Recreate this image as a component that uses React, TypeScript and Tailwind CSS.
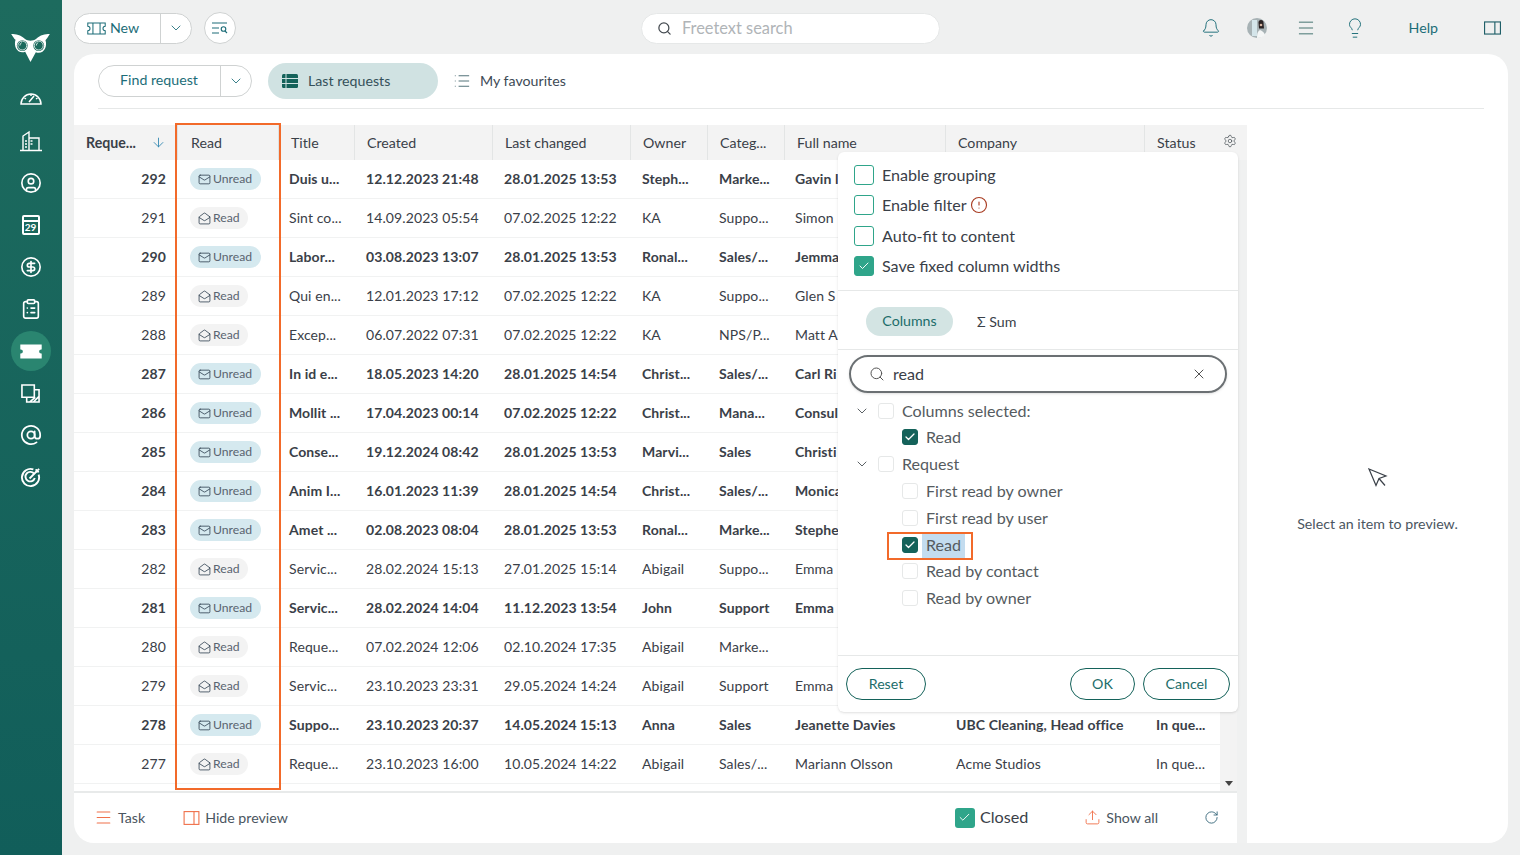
import React from 'react';
import {
  ArrowDown, AtSign, Bell, Check, ChevronDown, CircleAlert, CircleDollarSign, CircleUser, ClipboardList,
  Lightbulb, List, Mail, MailOpen, Menu, RotateCw, Search, Settings, Upload, X,
} from 'lucide-react';

const cols = 'grid grid-cols-[104px_101px_76px_138px_138px_77px_77px_161px_199px_75px]';

// Full name, company and status sit under the popover on most rows, only the visible part is kept
const rows = [
  ['292', 1, 'Duis u...', '12.12.2023 21:48', '28.01.2025 13:53', 'Steph...', 'Marke...', 'Gavin l', '', ''],
  ['291', 0, 'Sint co...', '14.09.2023 05:54', '07.02.2025 12:22', 'KA', 'Suppo...', 'Simon', '', ''],
  ['290', 1, 'Labor...', '03.08.2023 13:07', '28.01.2025 13:53', 'Ronal...', 'Sales/...', 'Jemma', '', ''],
  ['289', 0, 'Qui en...', '12.01.2023 17:12', '07.02.2025 12:22', 'KA', 'Suppo...', 'Glen S', '', ''],
  ['288', 0, 'Excep...', '06.07.2022 07:31', '07.02.2025 12:22', 'KA', 'NPS/P...', 'Matt A', '', ''],
  ['287', 1, 'In id e...', '18.05.2023 14:20', '28.01.2025 14:54', 'Christ...', 'Sales/...', 'Carl Ri', '', ''],
  ['286', 1, 'Mollit ...', '17.04.2023 00:14', '07.02.2025 12:22', 'Christ...', 'Mana...', 'Consul', '', ''],
  ['285', 1, 'Conse...', '19.12.2024 08:42', '28.01.2025 13:53', 'Marvi...', 'Sales', 'Christi', '', ''],
  ['284', 1, 'Anim I...', '16.01.2023 11:39', '28.01.2025 14:54', 'Christ...', 'Sales/...', 'Monica', '', ''],
  ['283', 1, 'Amet ...', '02.08.2023 08:04', '28.01.2025 13:53', 'Ronal...', 'Marke...', 'Stephe', '', ''],
  ['282', 0, 'Servic...', '28.02.2024 15:13', '27.01.2025 15:14', 'Abigail', 'Suppo...', 'Emma', '', ''],
  ['281', 1, 'Servic...', '28.02.2024 14:04', '11.12.2023 13:54', 'John', 'Support', 'Emma', '', ''],
  ['280', 0, 'Reque...', '07.02.2024 12:06', '02.10.2024 17:35', 'Abigail', 'Marke...', '', '', ''],
  ['279', 0, 'Servic...', '23.10.2023 23:31', '29.05.2024 14:24', 'Abigail', 'Support', 'Emma', '', ''],
  ['278', 1, 'Suppo...', '23.10.2023 20:37', '14.05.2024 15:13', 'Anna', 'Sales', 'Jeanette Davies', 'UBC Cleaning, Head office', 'In que...'],
  ['277', 0, 'Reque...', '23.10.2023 16:00', '10.05.2024 14:22', 'Abigail', 'Sales/...', 'Mariann Olsson', 'Acme Studios', 'In que...'],
] as const;

const heads = ['Title', 'Created', 'Last changed', 'Owner', 'Categ...', 'Full name', 'Company', 'Status'];

const TicketIcon = ({ className = '', filled = false }: { className?: string; filled?: boolean }) => (
  <svg viewBox="0 0 24 16" className={className} fill={filled ? 'currentColor' : 'none'} stroke="currentColor" strokeWidth="1.3">
    <path d="M1 1h22v4.2a2.8 2.8 0 0 0 0 5.6V15H1v-4.2a2.8 2.8 0 0 0 0-5.6z" />
    {!filled && <path d="M7.5 1v14M16.5 1v14" />}
  </svg>
);

const Owl = () => (
  <svg viewBox="0 0 40 30" className="w-[39px] h-[29px]" fill="#fff">
    <path d="M0 1c5 0 10 1 14 5 2 1.500 4 2 6 2s4-.5 6-2c4-4 9-5 14-5-2 3-3 5-4.500 6.500 2 6-1 13-7 13-1 0-2 0-3-.5L20 30l-5.500-10.500c-1 .5-2 .5-3 .5-6 0-9-7-7-13C3 6 2 4 0 1z" />
    <circle cx="11.500" cy="13" r="5.600" fill="#1a6a5d" />
    <circle cx="28.500" cy="13" r="5.600" fill="#1a6a5d" />
    <circle cx="11.500" cy="13" r="4.600" fill="none" stroke="#fff" strokeWidth="0.800" />
    <circle cx="28.500" cy="13" r="4.600" fill="none" stroke="#fff" strokeWidth="0.800" />
    <path d="M9 13a3 3 0 0 1 2-3M26 13a3 3 0 0 1 2-3" fill="none" stroke="#fff" strokeWidth="0.800" />
  </svg>
);

const Gauge = () => (
  <svg viewBox="0 0 22 16" className="w-[22px] h-[16px] -mt-[4px]" fill="none" stroke="#fff" strokeWidth="1.500">
    <path d="M1 15a10 10 0 0 1 20 0z" />
    <path d="M9 13l5-6M11 5v2M4.500 9l1.500 1M17.500 9l-1.500 1" />
  </svg>
);

const Building = () => (
  <svg viewBox="0 0 22 22" className="w-[22px] h-[22px]" fill="none" stroke="#fff" strokeWidth="1.400">
    <path d="M0 20.500h22M3 20V6l6-4v18M9 8h10v12" />
    <path d="M5 11h2M5 14h2M5 17h2M10.500 11h2M10.500 14h2" />
  </svg>
);

const Calendar = () => (
  <div className="w-[18px] h-[20px] border-2 border-white rounded-[2px] flex items-end justify-center text-white text-[10px] leading-[12px] font-bold relative">
    <div className="absolute top-[3px] left-0 right-0 h-[1.500px] bg-white"></div>
    29
  </div>
);

const Copies = () => (
  <svg viewBox="0 0 20 20" className="w-[19px] h-[19px]" fill="none" stroke="#fff" strokeWidth="1.700">
    <path d="M1 1h13v13H1z" />
    <path d="M6 14v5h13V6h-5M9 19l6-5M13 19l6-6" />
  </svg>
);

const TargetIcon = () => (
  <svg viewBox="0 0 22 22" className="w-[21px] h-[21px]" fill="none" stroke="#fff" strokeWidth="2">
    <path d="M19.500 8a9 9 0 1 1-5.500-5.500" />
    <path d="M15 7.500a5 5 0 1 0 .500 4" />
    <path d="M10 12L20 2" />
    <path d="M17 2v3h3" strokeWidth="1.500" />
  </svg>
);

const NavSlot = ({ children }: { children: React.ReactNode }) => (
  <div className="h-[42px] flex items-center justify-center text-white">{children}</div>
);

const Sidebar = () => (
  <div className="w-[62px] shrink-0 bg-gradient-to-b from-[#1d6b5e] to-[#115e5a] flex flex-col items-center pr-[1px]">
    <div className="mt-[33px] h-[45px]"><Owl /></div>
    <NavSlot><Gauge /></NavSlot>
    <NavSlot><Building /></NavSlot>
    <NavSlot><CircleUser size={22} strokeWidth={1.800} /></NavSlot>
    <NavSlot><Calendar /></NavSlot>
    <NavSlot><CircleDollarSign size={22} strokeWidth={1.800} /></NavSlot>
    <NavSlot><ClipboardList size={22} strokeWidth={1.800} /></NavSlot>
    <NavSlot>
      <div className="w-10 h-10 rounded-full flex items-center justify-center bg-[#2a8570]">
        <TicketIcon filled className="w-[22px] h-[15px]" />
      </div>
    </NavSlot>
    <NavSlot><Copies /></NavSlot>
    <NavSlot><AtSign size={22} strokeWidth={1.900} /></NavSlot>
    <NavSlot><TargetIcon /></NavSlot>
  </div>
);

const TopBar = () => (
  <div className="h-[54px] shrink-0 flex items-center pl-[12px] pr-[19px] pt-[2px] text-[#1c6d78]">
    <div className="h-[31px] w-[118px] bg-white border border-[#cfd2d2] rounded-full flex items-center">
      <div className="w-[86px] h-full flex items-center pl-[12px] gap-[4px] border-r border-[#cfd2d2] text-[14.200px]">
        <TicketIcon className="w-[19px] h-[13px] text-[#1c6d78]" />
        <span>New</span>
      </div>
      <div className="flex-1 flex justify-center"><ChevronDown size={16} strokeWidth={1.300} /></div>
    </div>
    <div className="ml-[12px] w-[32px] h-[32px] bg-white border border-[#cfd2d2] rounded-full flex items-center justify-center">
      <svg viewBox="0 0 16 12" className="w-[16px] h-[12px]" fill="none" stroke="#1c6d78" strokeWidth="1.100">
        <path d="M0 1h15M0 6h7M0 11h7" />
        <circle cx="11.500" cy="7" r="2.300" />
        <path d="M13 9l2 2" />
      </svg>
    </div>
    <div className="ml-[405px] w-[299px] h-[31px] bg-white rounded-full border border-[#e6e8e8] flex items-center pl-[15px] gap-[10px] text-[#b0b4b7] text-[16.400px]">
      <Search size={15} className="text-[#444a50]" />
      <span>Freetext search</span>
    </div>
    <div className="flex-1"></div>
    <Bell size={20} strokeWidth={1.150} className="mr-[26px]" />
    <svg viewBox="0 0 20 20" className="w-[20px] h-[20px] mr-[29px]">
      <circle cx="10" cy="10" r="10" fill="#a7b2b5" />
      <path d="M5 2h5v16H5z" fill="#d4e5ea" />
      <path d="M10 20c0-5 1-7 3-8 2 1 4 2 5 5-2 2-5 3-8 3z" fill="#f4f6f6" />
      <path d="M11.500 4.500a2.500 2.500 0 0 1 5 0l.5 6h-5z" fill="#2b2324" />
      <circle cx="14" cy="7" r="1.300" fill="#d6b5a2" />
    </svg>
    <Menu size={20} strokeWidth={1.150} className="mr-[28px] text-[#3f6f6c]" />
    <Lightbulb size={22} strokeWidth={1.050} />
    <span className="ml-[43px] text-[14.200px]">Help</span>
    <svg viewBox="0 0 18 14" className="ml-[46px] w-[17px] h-[14px]" fill="none" stroke="#1f5f68" strokeWidth="1.200">
      <rect x="0.600" y="0.600" width="16.800" height="12.800" />
      <path d="M11.500 0.600v12.800" />
    </svg>
  </div>
);

const Toolbar = () => (
  <div className="h-[55px] mx-[24px] shrink-0 border-b border-[#e6e8e8] flex items-center text-[14.200px] pb-[1px]">
    <div className="h-[32px] w-[154px] border border-[#cfd2d2] rounded-full flex items-center text-[#1c6d78] ml-0">
      <div className="w-[122px] h-full flex items-center justify-center border-r border-[#cfd2d2] pb-[1px] pr-[1px]">Find request</div>
      <div className="flex-1 flex justify-center"><ChevronDown size={16} strokeWidth={1.300} /></div>
    </div>
    <div className="ml-[16px] w-[170px] h-[36px] rounded-full bg-[#d0e2e2] flex items-center pl-[14px] gap-[10px] text-[#34505a]">
      <svg viewBox="0 0 16 14" className="w-[16px] h-[14px]"><rect width="16" height="14" rx="1.500" fill="#14625a" /><path d="M0 4.500h16M0 9.500h16M4 0v14" stroke="#d0e2e2" strokeWidth="1" /></svg>
      <span>Last requests</span>
    </div>
    <List size={18} strokeWidth={1.200} className="ml-[15px] text-[#40626a]" />
    <span className="ml-[9px] text-[#3d4a55]">My favourites</span>
  </div>
);

const Badge = ({ unread }: { unread: boolean }) => (
  <div className={`h-[22px] rounded-full flex items-center gap-[2px] pl-[8px] text-[12.200px] text-[#5a6470] ${unread ? 'w-[71px] bg-[#d5e9ef]' : 'w-[58px] bg-[#f3f3f3]'}`}>
    {unread ? <Mail size={13} strokeWidth={1.500} className="text-[#2f4050]" /> : <MailOpen size={13} strokeWidth={1.500} className="text-[#2f4050]" />}
    <span>{unread ? 'Unread' : 'Read'}</span>
  </div>
);

const Table = () => (
  <div className="flex-1 min-h-0 relative overflow-hidden">
    <div className={`${cols} h-[35px] bg-[#f3f3f3] text-[14.200px] text-[#3a4048] items-center`}>
      <div className="h-full flex items-center pl-[12px] border-r border-[#dfe1e1] font-bold">
        <span>Reque...</span>
        <ArrowDown size={15} strokeWidth={1.400} className="ml-[15px] text-[#2f86b0]" />
      </div>
      <div className="h-full flex items-center pl-[13px] border-r border-[#dfe1e1]">Read</div>
      {heads.map((h) => (
        <div key={h} className="h-full flex items-center pl-[12px] border-r border-[#e3e5e5] last:border-r-0">{h}</div>
      ))}
    </div>
    {rows.map((r) => (
      <div key={r[0]} className={`${cols} h-[39px] border-b border-[#f1f2f2] items-center text-[14px] tracking-[0.1px] text-[#3a4048] ${r[1] ? 'font-bold' : ''}`}>
        <div className="pr-[12px] pb-[2px] text-right">{r[0]}</div>
        <div className="pl-[12px] font-normal tracking-normal"><Badge unread={!!r[1]} /></div>
        {r.slice(2).map((c, i) => (
          <div key={i} className={`pb-[2px] whitespace-nowrap overflow-hidden ${i === 0 || i === 5 || i === 6 ? 'pl-[10px]' : 'pl-[11px]'}`}>{c}</div>
        ))}
      </div>
    ))}
    <div className="absolute right-0 top-[35px] bottom-0 w-[17px] bg-[#f3f3f3] flex flex-col justify-end items-center pb-[5px]">
      <div className="w-0 h-0 border-x-[4px] border-x-transparent border-t-[5px] border-t-[#444]"></div>
    </div>
  </div>
);

const Footer = () => (
  <div className="h-[52px] shrink-0 border-t-2 border-[#e8eaea] flex items-center text-[14.200px] text-[#4a5560] pb-[1px]">
    <Menu size={19} strokeWidth={1.300} className="ml-[20px] text-[#f0704a]" />
    <span className="ml-[5px]">Task</span>
    <svg viewBox="0 0 16 14" className="ml-[38px] w-[17px] h-[14px]" fill="none" stroke="#f0704a" strokeWidth="1.100"><rect x="0.600" y="0.600" width="14.800" height="12.800" /><path d="M10.500 0.600v12.800" /></svg>
    <span className="ml-[5px]">Hide preview</span>
    <div className="flex-1"></div>
    <div className="w-[20px] h-[20px] rounded-[3px] bg-[#2fa58a] flex items-center justify-center -ml-[1px] mr-[1px]"><Check size={13} strokeWidth={1.700} className="text-white" /></div>
    <span className="ml-[4px] text-[16.200px] text-[#3a4048]">Closed</span>
    <Upload size={17} strokeWidth={1.300} className="ml-[56px] text-[#f0704a]" />
    <span className="ml-[5px]">Show all</span>
    <RotateCw size={15} strokeWidth={1.400} className="ml-[46px] mr-[18px] text-[#2f6175]" />
  </div>
);

const Box = ({ checked = false, teal = false }: { checked?: boolean; teal?: boolean }) => {
  if (teal) {
    return (
      <div className={`w-[20px] h-[20px] rounded-[3px] border border-[#2fa58a] flex items-center justify-center ${checked ? 'bg-[#2fa58a]' : 'bg-white'}`}>
        {checked && <Check size={12} strokeWidth={1.900} className="text-white" />}
      </div>
    );
  }
  return (
    <div className={`w-[16px] h-[16px] rounded-[3px] border flex items-center justify-center shrink-0 ${checked ? 'bg-[#14625a] border-[#14625a]' : 'bg-white border-[#e6e8e8]'}`}>
      {checked && <Check size={12} strokeWidth={2.500} className="text-white" />}
    </div>
  );
};

const Option = ({ label, checked = false, alert = false }: { label: string; checked?: boolean; alert?: boolean }) => (
  <div className="h-[30.300px] flex items-center gap-[8px] text-[16.100px] text-[#3a4048]">
    <Box teal checked={checked} />
    <span>{label}</span>
    {alert && <CircleAlert size={18} strokeWidth={1.500} className="-ml-[5px] text-[#a83c22]" />}
  </div>
);

const TreeHead = ({ label }: { label: string }) => (
  <div className="h-[26.800px] flex items-center text-[16.100px] text-[#555b60]">
    <ChevronDown size={16} strokeWidth={1.400} className="ml-[16px] text-[#50565a]" />
    <div className="ml-[8px]"><Box /></div>
    <span className="ml-[8px]">{label}</span>
  </div>
);

const TreeItem = ({ label, checked = false, marked = false }: { label: string; checked?: boolean; marked?: boolean }) => (
  <div className="h-[26.800px] flex items-center pl-[64px] text-[16.100px] text-[#555b60]">
    <Box checked={checked} />
    <span className={`ml-[4px] px-[4px] leading-[26px] ${marked ? 'bg-[#c3dcef]' : ''}`}>{label}</span>
  </div>
);

const Popover = () => (
  <div className="absolute left-[838px] top-[152px] w-[400px] h-[560px] bg-white rounded-[6px] shadow-sm flex flex-col">
    <div className="h-[139px] border-b border-[#e6e8e8] pl-[16px] pt-[8px] shrink-0">
      <Option label="Enable grouping" />
      <Option label="Enable filter" alert />
      <Option label="Auto-fit to content" />
      <Option label="Save fixed column widths" checked />
    </div>
    <div className="h-[59px] border-b border-[#e6e8e8] shrink-0 flex items-center pl-[28px] pt-[2px] text-[14.200px]">
      <div className="w-[87px] h-[29px] rounded-full bg-[#d3e4e3] text-[#1c6d6a] flex items-center justify-center">Columns</div>
      <span className="ml-[24px] pt-[1px] text-[#3a4048]">Σ Sum</span>
    </div>
    <div className="px-[11px] pt-[5px] shrink-0">
      <div className="h-[38px] rounded-full border-2 border-[#6b7073] flex items-center pl-[18px] pr-[18px] text-[16.100px] text-[#3a4048] shadow-sm">
        <Search size={16} strokeWidth={1.500} className="text-[#555]" />
        <span className="ml-[8px] flex-1">read</span>
        <X size={16} strokeWidth={1.400} className="text-[#444]" />
      </div>
    </div>
    <div className="pt-[4.200px] flex-1 relative">
      <TreeHead label="Columns selected:" />
      <TreeItem label="Read" checked />
      <TreeHead label="Request" />
      <TreeItem label="First read by owner" />
      <TreeItem label="First read by user" />
      <TreeItem label="Read" checked marked />
      <TreeItem label="Read by contact" />
      <TreeItem label="Read by owner" />
      <div className="absolute left-[49px] top-[139px] w-[86px] h-[28px] border-2 border-[#f26a2a]"></div>
    </div>
    <div className="h-[57px] border-t border-[#e6e8e8] shrink-0 flex items-center px-[8px] pb-[1px] text-[14.200px] text-[#1c6d6a]">
      <div className="w-[80px] h-[32px] rounded-full border border-[#14625a] flex items-center justify-center">Reset</div>
      <div className="flex-1"></div>
      <div className="w-[65px] h-[32px] rounded-full border border-[#14625a] flex items-center justify-center">OK</div>
      <div className="ml-[8px] w-[87px] h-[32px] rounded-full border border-[#14625a] flex items-center justify-center">Cancel</div>
    </div>
  </div>
);

const App = () => (
  <div className="w-[1520px] h-[855px] flex overflow-hidden bg-[#eff0f0] relative font-['Lato',sans-serif]">
    <Sidebar />
    <div className="flex-1 flex flex-col min-w-0">
      <TopBar />
      <div className="ml-[12px] mr-[12px] h-[789px] bg-white rounded-[20px] overflow-hidden flex flex-col">
        <Toolbar />
        <div className="h-[16px] shrink-0"></div>
        <div className="flex-1 min-h-0 flex">
          <div className="w-[1163px] shrink-0 flex flex-col">
            <Table />
            <Footer />
          </div>
          <div className="w-[10px] shrink-0 bg-[#f0f1f1] relative">
            <div className="h-[35px] bg-[#f3f3f3] flex items-center justify-start pl-[3px] -ml-[17px] w-[27px]">
              <Settings size={14} strokeWidth={1.300} className="text-[#50585e] -mt-[3px]" />
            </div>
          </div>
          <div className="flex-1 flex flex-col items-center text-[14.200px] text-[#4a5560] pt-[343px]">
            <svg viewBox="0 0 20 20" className="w-[20px] h-[20px] mb-[25px]" fill="none" stroke="#3a4048" strokeWidth="1.200">
              <path d="M1 1l17 7-7 2.500-3 7z" />
              <path d="M11 10.500l6 7" />
            </svg>
            <span>Select an item to preview.</span>
          </div>
        </div>
      </div>
    </div>
    <Popover />
    <div className="absolute left-[175px] top-[123px] w-[106px] h-[667px] border-2 border-[#f26a2a]"></div>
  </div>
);

export default App;
